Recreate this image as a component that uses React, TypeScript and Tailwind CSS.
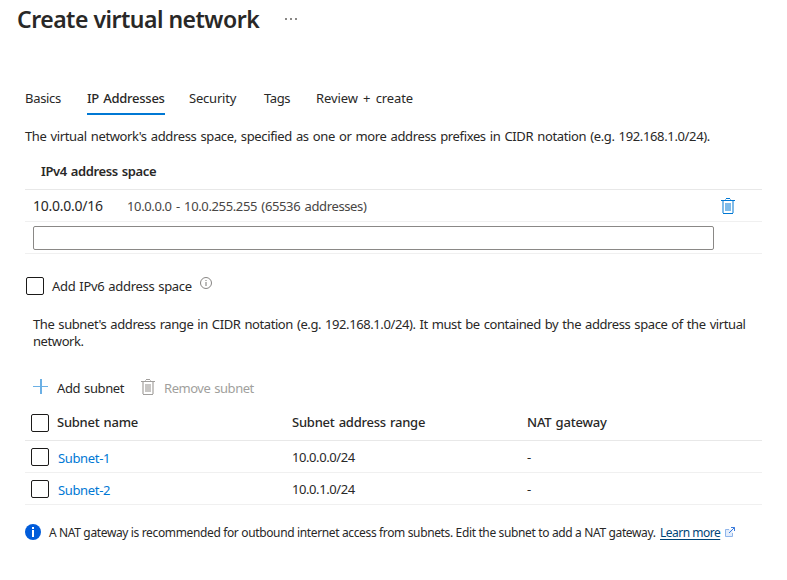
import type { ReactNode } from "react";

function Trash({ className, dark, light }: { className?: string; dark: string; light: string }) {
  return (
    <svg width="14" height="16" viewBox="0 0 14 16" shapeRendering="crispEdges" className={className}>
      <path d="M1 3h2v12H1zM11 3h2v12h-2zM4 1h1v1H4zM9 1h1v1H9zM4 5h6v8H4z" fill={light} />
      <path d="M0 2h14v1H0zM5 0h4v1H5zM2 15h10v1H2z" fill={dark} />
    </svg>
  );
}

function Checkbox() {
  return <span className="block size-[18px] shrink-0 rounded-[2px] border border-[#1b1a19] bg-white" />;
}

function Tab({ className, children }: { className: string; children: ReactNode }) {
  return <div className={`h-[31px] shrink-0 whitespace-nowrap leading-[29px] ${className}`}>{children}</div>;
}

function SubnetRow({ name, range }: { name: string; range: string }) {
  return (
    <div className="flex h-8 border-b border-[#f0f0f0]">
      <div className="flex w-[267px] pl-1.5 pt-[7px]">
        <Checkbox />
        <a className="ml-[9px] mt-px leading-[18px] tracking-[-0.35px] text-[#0078d4]">{name}</a>
      </div>
      <div className="w-[235px] pt-[7px] leading-[18px] tracking-[-0.42px]">{range}</div>
      <div className="pt-[7px] leading-[18px]">-</div>
    </div>
  );
}

export default function App() {
  return (
    <div className="h-[580px] w-[787px] overflow-hidden bg-white font-['Noto_Sans',sans-serif] text-[13px] text-[#292827]">
      <header className="flex h-[84px] pl-[17px]">
        <h1 className="w-[268px] whitespace-nowrap text-[23px] font-semibold leading-[38px] tracking-[-0.5px]">
          Create virtual network
        </h1>
        <div className="flex h-[38px] items-center gap-[3px]">
          <i className="size-[2px] bg-[#8a8886]" />
          <i className="size-[2px] bg-[#8a8886]" />
          <i className="size-[2px] bg-[#8a8886]" />
        </div>
      </header>
      <main className="ml-[25px] w-[737px]">
        <nav className="flex">
          <Tab className="mr-[26px] w-[36px] tracking-[-0.3px]">Basics</Tab>
          <Tab className="mr-6 w-[78px] border-b-2 border-[#0078d4] font-medium tracking-[-0.25px] [word-spacing:1px]">
            IP Addresses
          </Tab>
          <Tab className="mr-[27px] w-[48px] tracking-[-0.2px]">Security</Tab>
          <Tab className="mr-[26px] w-[26px] tracking-[-0.4px]">Tags</Tab>
          <Tab className="tracking-[-0.1px] [word-spacing:2px]">Review + create</Tab>
        </nav>
        <p className="h-[38px] whitespace-nowrap pt-3 leading-[18px] tracking-[-0.36px] [word-spacing:1px]">
          The virtual network's address space, specified as one or more address prefixes in CIDR notation (e.g.
          192.168.1.0/24).
        </p>
        <section>
          <div className="h-[37px] border-b border-[#e8e8e8] pl-4 pt-[9px] font-semibold leading-[18px] tracking-[-0.36px] [word-spacing:0.8px]">
            IPv4 address space
          </div>
          <div className="flex h-8 border-b border-[#f0f0f0] pl-2 leading-[32px]">
            <span className="w-[94px] text-[14px] tracking-[-0.25px]">10.0.0.0/16</span>
            <span className="tracking-[-0.37px] text-[#484644] [word-spacing:1.3px]">
              10.0.0.0 - 10.0.255.255 (65536 addresses)
            </span>
            <Trash className="ml-auto mr-[27px] mt-2" dark="#0078d4" light="#7fbbe9" />
          </div>
          <div className="h-8 border-b border-[#f0f0f0] pl-2 pt-1">
            <div className="h-6 w-[681px] rounded-[2px] border border-[#8a8886]" />
          </div>
        </section>
        <div className="flex h-[62px] pl-px pt-[23px]">
          <Checkbox />
          <span className="ml-2 w-[148px] whitespace-nowrap leading-[19px] tracking-[-0.3px] [word-spacing:0.8px]">
            Add IPv6 address space
          </span>
          <svg width="12" height="12" viewBox="0 0 12 12" fill="none" stroke="#797775">
            <circle cx="6" cy="6" r="5.5" strokeWidth=".9" />
            <path d="M6 5v4M6 3v1" />
          </svg>
        </div>
        <p className="h-[63px] whitespace-nowrap pl-2 leading-[17px] tracking-[-0.41px] [word-spacing:1px]">
          The subnet's address range in CIDR notation (e.g. 192.168.1.0/24). It must be contained by the address space
          of the virtual
          <br />
          network.
        </p>
        <div className="flex h-[29px] pl-2">
          <svg width="16" height="16" viewBox="0 0 16 16" shapeRendering="crispEdges">
            <path d="M7 0h2v15H7zM0 7h15v1H0z" fill="#6bb0e5" />
          </svg>
          <span className="ml-2 w-[84px] whitespace-nowrap leading-[18px] tracking-[-0.4px] [word-spacing:1px]">
            Add subnet
          </span>
          <Trash dark="#a19f9d" light="#c8c6c4" />
          <span className="ml-[9px] whitespace-nowrap leading-[18px] tracking-[-0.46px] text-[#a19f9d] [word-spacing:1px]">
            Remove subnet
          </span>
        </div>
        <section>
          <div className="flex h-[33px] border-b border-[#e8e8e8] font-medium leading-[18px]">
            <div className="flex w-[267px] pl-1.5 pt-[6px]">
              <Checkbox />
              <span className="ml-2 -mt-px tracking-[-0.25px] [word-spacing:1px]">Subnet name</span>
            </div>
            <div className="w-[235px] pt-[5px] tracking-[-0.24px] [word-spacing:1px]">Subnet address range</div>
            <div className="pt-[5px] tracking-[-0.2px] [word-spacing:1px]">NAT gateway</div>
          </div>
          <SubnetRow name="Subnet-1" range="10.0.0.0/24" />
          <SubnetRow name="Subnet-2" range="10.0.1.0/24" />
        </section>
        <footer className="flex h-10 whitespace-nowrap pt-[19px] text-[12px] leading-[18px]">
          <svg width="16" height="16" viewBox="0 0 16 16">
            <circle cx="8" cy="8" r="8" fill="#015cda" />
            <path d="M7 3h2v2H7zM7 6h2v7H7z" fill="#fff" />
          </svg>
          <span className="ml-2 w-[611px] tracking-[-0.36px]">
            A NAT gateway is recommended for outbound internet access from subnets. Edit the subnet to add a NAT gateway.
          </span>
          <a className="w-[65px] tracking-[-0.5px] text-[#004578] underline underline-offset-2">Learn more</a>
          <svg width="10" height="10" viewBox="0 0 10 10" className="mt-[3px]" fill="none">
            <path d="M.5 2.5h7v7h-7z" fill="#e3edfb" />
            <path d="M4 2.5H.5v7h7V6" stroke="#8fb5ea" />
            <path d="M6 .5h3.5V4M9.5.5L4 6" stroke="#3b7bdc" />
          </svg>
        </footer>
      </main>
    </div>
  );
}
